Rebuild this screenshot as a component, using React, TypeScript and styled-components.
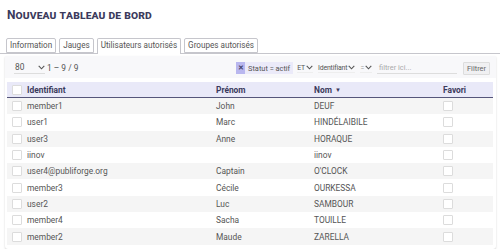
import styled, { createGlobalStyle } from "styled-components";

const GlobalStyle = createGlobalStyle`
  html, body {
    margin: 0;
    padding: 0;
    background: #fff;
  }
  body {
    font-family: Roboto, "Liberation Sans", sans-serif;
    width: 500px;
    height: 249px;
    overflow: hidden;
  }
`;

const users = [
  { id: "member1", first: "John", last: "DEUF" },
  { id: "user1", first: "Marc", last: "HINDÉLAIBILE" },
  { id: "user3", first: "Anne", last: "HORAQUE" },
  { id: "iinov", first: "", last: "iinov" },
  { id: "user4@publiforge.org", first: "Captain", last: "O'CLOCK" },
  { id: "member3", first: "Cécile", last: "OURKESSA" },
  { id: "user2", first: "Luc", last: "SAMBOUR" },
  { id: "member4", first: "Sacha", last: "TOUILLE" },
  { id: "member2", first: "Maude", last: "ZARELLA" },
];

const tabs = ["Information", "Jauges", "Utilisateurs autorisés", "Groupes autorisés"];

const Chevron = () => (
  <svg width="7" height="5" viewBox="0 0 7 5">
    <path d="M0.7 0.8 L3.5 3.8 L6.3 0.8" fill="none" stroke="#555" strokeWidth="1.1" />
  </svg>
);

const App = () => {
  return (
    <Page>
      <GlobalStyle />
      <Title>Nouveau tableau de bord</Title>
      <TabBar>
        {tabs.map((t, i) => (
          <Tab key={t} $active={i === 2}>
            {t}
          </Tab>
        ))}
      </TabBar>
      <Panel>
        <Toolbar>
          <Pager>
            <PageSize>
              80 <Chevron />
            </PageSize>
            <span>1 – 9 / 9</span>
          </Pager>
          <Filters>
            <Chip>
              <ChipClose>✕</ChipClose>
              <ChipLabel>Statut = actif</ChipLabel>
            </Chip>
            <Choice>
              ET <Chevron />
            </Choice>
            <Choice>
              Identifiant
              <Chevron />
            </Choice>
            <Choice $muted>
              = <Chevron />
            </Choice>
            <FilterInput>filtrer ici...</FilterInput>
            <FilterButton>Filtrer</FilterButton>
          </Filters>
        </Toolbar>
        <Table>
          <HeadRow>
            <Cell>
              <Box />
            </Cell>
            <HeadCell>Identifiant</HeadCell>
            <HeadCell>Prénom</HeadCell>
            <HeadCell>
              Nom <SortArrow>▼</SortArrow>
            </HeadCell>
            <HeadCell>Favori</HeadCell>
          </HeadRow>
          {users.map((u, i) => (
            <Row key={u.id} $odd={i % 2 === 0}>
              <Cell>
                <Box />
              </Cell>
              <Cell>{u.id}</Cell>
              <Cell>{u.first}</Cell>
              <Cell>{u.last}</Cell>
              <Cell>
                <Box />
              </Cell>
            </Row>
          ))}
        </Table>
      </Panel>
    </Page>
  );
};

const Page = styled.div`
  width: 500px;
  height: 249px;
  display: flex;
  flex-direction: column;
`;

const Title = styled.h1`
  margin: 0;
  padding: 8px 7px 0;
  height: 30px;
  box-sizing: border-box;
  font-size: 12px;
  font-weight: 700;
  font-variant: small-caps;
  color: #3b3a5c;
  letter-spacing: 0.1px;
`;

const TabBar = styled.div`
  display: flex;
  gap: 3px;
  margin-top: 8px;
  padding-left: 6px;
  border-bottom: 1px solid #c6c6cc;
  height: 15px;
`;

const Tab = styled.div<{ $active?: boolean }>`
  box-sizing: border-box;
  height: ${(p) => (p.$active ? "16px" : "15px")};
  padding: 0 3px;
  border: 1px solid #c6c6cc;
  border-bottom: ${(p) => (p.$active ? "none" : "1px solid #c6c6cc")};
  border-radius: 2px 2px 0 0;
  background: #fff;
  font-size: 8.15px;
  line-height: 13px;
  color: #555;
`;

const Panel = styled.div`
  margin: 2px 4px 0 5px;
  flex: 1;
  background: #fff;
  border-radius: 0 0 3px 3px;
  box-shadow: 0 1px 2px rgba(0, 0, 0, 0.18);
  display: flex;
  flex-direction: column;
`;

const Toolbar = styled.div`
  display: flex;
  align-items: center;
  justify-content: space-between;
  background: #f8f8fa;
  height: 20px;
  padding: 2px 6px 0 9px;
  margin-bottom: 4px;
  font-size: 8.4px;
  color: #555;
`;

const Pager = styled.div`
  display: flex;
  align-items: center;
  gap: 2px;
`;

const PageSize = styled.div`
  display: flex;
  align-items: center;
  justify-content: space-between;
  width: 30px;
  padding: 0 0 1px 1px;
  border-bottom: 1px solid #ddd;
`;

const Filters = styled.div`
  display: flex;
  align-items: center;
  gap: 3px;
`;

const Chip = styled.div`
  display: flex;
  height: 12px;
  align-items: stretch;
  font-size: 7.4px;
  margin-right: 1px;
`;

const ChipClose = styled.span`
  background: #b9b7ef;
  color: #44446a;
  width: 9px;
  display: flex;
  align-items: center;
  justify-content: center;
  font-size: 6.5px;
  font-weight: 700;
`;

const ChipLabel = styled.span`
  background: #ebeaf9;
  padding: 0 3px;
  display: flex;
  align-items: center;
  color: #555;
`;

const Choice = styled.div<{ $muted?: boolean }>`
  display: flex;
  align-items: center;
  gap: 1px;
  font-size: 6.9px;
  letter-spacing: -0.15px;
  color: ${(p) => (p.$muted ? "#999" : "#555")};
  margin-right: 2px;
  border-bottom: 1px solid #eee;
`;

const FilterInput = styled.div`
  width: 76px;
  padding: 0 2px 1px;
  border-bottom: 1px solid #ddd;
  color: #aaa;
  font-size: 7.4px;
`;

const FilterButton = styled.div`
  margin-left: 3px;
  padding: 1px 3px;
  background: #f0f0f2;
  border: 1px solid #ddd;
  border-radius: 1px;
  font-size: 7.4px;
  color: #666;
`;

const Table = styled.div`
  margin: 0 3px 0 2px;
  display: flex;
  flex-direction: column;
`;

const HeadRow = styled.div`
  display: grid;
  grid-template-columns: 20px 189px 98px 129px 1fr;
  height: 16px;
  align-items: center;
  background: #e9e9f8;
  border-bottom: 1.5px solid #55557a;
  box-sizing: border-box;
`;

const Row = styled.div<{ $odd?: boolean }>`
  display: grid;
  grid-template-columns: 20px 189px 98px 129px 1fr;
  height: 16.3px;
  align-items: center;
  background: ${(p) => (p.$odd ? "#f5f5f5" : "#fff")};
`;

const Cell = styled.div`
  font-size: 8.4px;
  color: #555;
  white-space: nowrap;
  display: flex;
  align-items: center;
  &:first-child {
    padding-left: 5px;
  }
`;

const HeadCell = styled(Cell)`
  font-weight: 700;
  color: #3b3a5c;
  gap: 3px;
`;

const SortArrow = styled.span`
  font-size: 6px;
  color: #3b3a5c;
`;

const Box = styled.div`
  width: 10px;
  height: 10px;
  box-sizing: border-box;
  border: 1px solid #dcdcdc;
  border-radius: 1px;
  background: #fff;
`;

export default App;
